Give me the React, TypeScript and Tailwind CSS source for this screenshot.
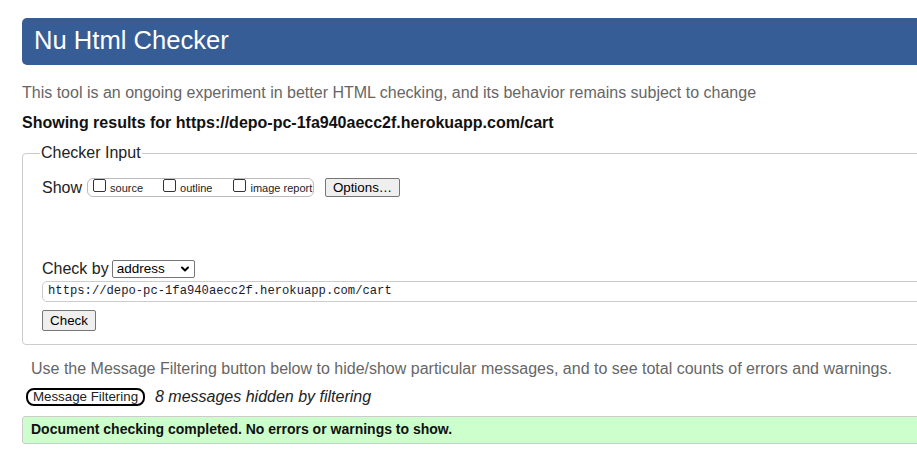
import { ChevronDown } from 'lucide-react'

function Box({ label }: { label: string }) {
  return (
    <>
      <span className="inline-block w-[13px] h-[13px] align-baseline border border-[#333] rounded-[2px] bg-white mr-[4px]" />
      <span>{label}</span>
    </>
  )
}

export default function App() {
  return (
    <div className="w-[917px] h-[454px] overflow-hidden bg-white font-['Liberation_Sans',Arial,sans-serif] text-[16px] text-black">
      <div className="ml-[22px] w-[1000px] pt-[18px]">
        <div className="h-[47px] bg-[#365d95] rounded-[5px] flex items-center pl-[12px] pb-[2px]">
          <h1 className="text-white text-[25.6px] leading-none">Nu Html Checker</h1>
        </div>

        <p className="mt-[18px] leading-[20px] text-[#666]">
          This tool is an ongoing experiment in better HTML checking, and its behavior remains subject to change
        </p>
        <p className="mt-[10px] leading-[20px] font-bold text-[#111]">
          Showing results for https://depo-pc-1fa940aecc2f.herokuapp.com/cart
        </p>

        <fieldset className="mt-[10px] border border-[#ccc] rounded-[4px] pl-[19px] pb-[12px]">
          <legend className="-ml-[2px] px-[1px] leading-[20px] text-[#222]">Checker Input</legend>

          <div className="mt-[15px] flex items-center h-[19px]">
            <span className="leading-[20px] text-[#222]">Show</span>
            <div className="ml-[5px] w-[227px] h-[19px] border border-[#bbb] rounded-[6px] pl-[5px] text-[11px] leading-[17px] text-[#222] whitespace-nowrap">
              <Box label="source" />
              <span className="inline-block w-[20px]" />
              <Box label="outline" />
              <span className="inline-block w-[21px]" />
              <Box label="image report" />
            </div>
            <button className="ml-[11px] w-[75px] h-[19px] border border-[#767676] rounded-[2px] bg-[#efefef] text-[13.33px] leading-none text-black">
              Options…
            </button>
          </div>

          <div className="mt-[63px] flex items-center h-[17px]">
            <span className="leading-[20px] text-[#222]">Check by</span>
            <div className="ml-[3px] w-[83px] h-[18px] border border-[#767676] rounded-[2px] bg-white flex items-center justify-between pl-[4px] pr-[3px] text-[13.5px] leading-none">
              <span>address</span>
              <ChevronDown className="w-[12px] h-[12px]" strokeWidth={4} />
            </div>
          </div>

          <div className="mt-[4px] h-[21px] border border-[#ccc] rounded-[5px] flex items-center pl-[5px] font-['Liberation_Mono',monospace] text-[12.2px] text-[#1a1a2e]">
            https://depo-pc-1fa940aecc2f.herokuapp.com/cart
          </div>

          <button className="mt-[8px] w-[54px] h-[21px] border border-[#767676] rounded-[2px] bg-[#efefef] text-[13.33px] leading-none text-black">
            Check
          </button>
        </fieldset>

        <p className="mt-[14px] pl-[9px] leading-[20px] text-[#666] whitespace-nowrap">
          Use the Message Filtering button below to hide/show particular messages, and to see total counts of errors and warnings.
        </p>

        <div className="mt-[9px] flex items-center h-[18px]">
          <button className="ml-[4px] w-[119px] h-[18px] border-2 border-black rounded-[8px] bg-white text-[13.33px] leading-none text-[#222]">
            Message Filtering
          </button>
          <span className="ml-[10px] italic leading-[20px] text-[#222]">8 messages hidden by filtering</span>
        </div>

        <div className="mt-[10px] h-[28px] border border-[#ccc] rounded-[3px] bg-[#ccffcc] flex items-center pl-[8px] text-[14px] font-bold text-[#111]">
          Document checking completed. No errors or warnings to show.
        </div>
      </div>
    </div>
  )
}
